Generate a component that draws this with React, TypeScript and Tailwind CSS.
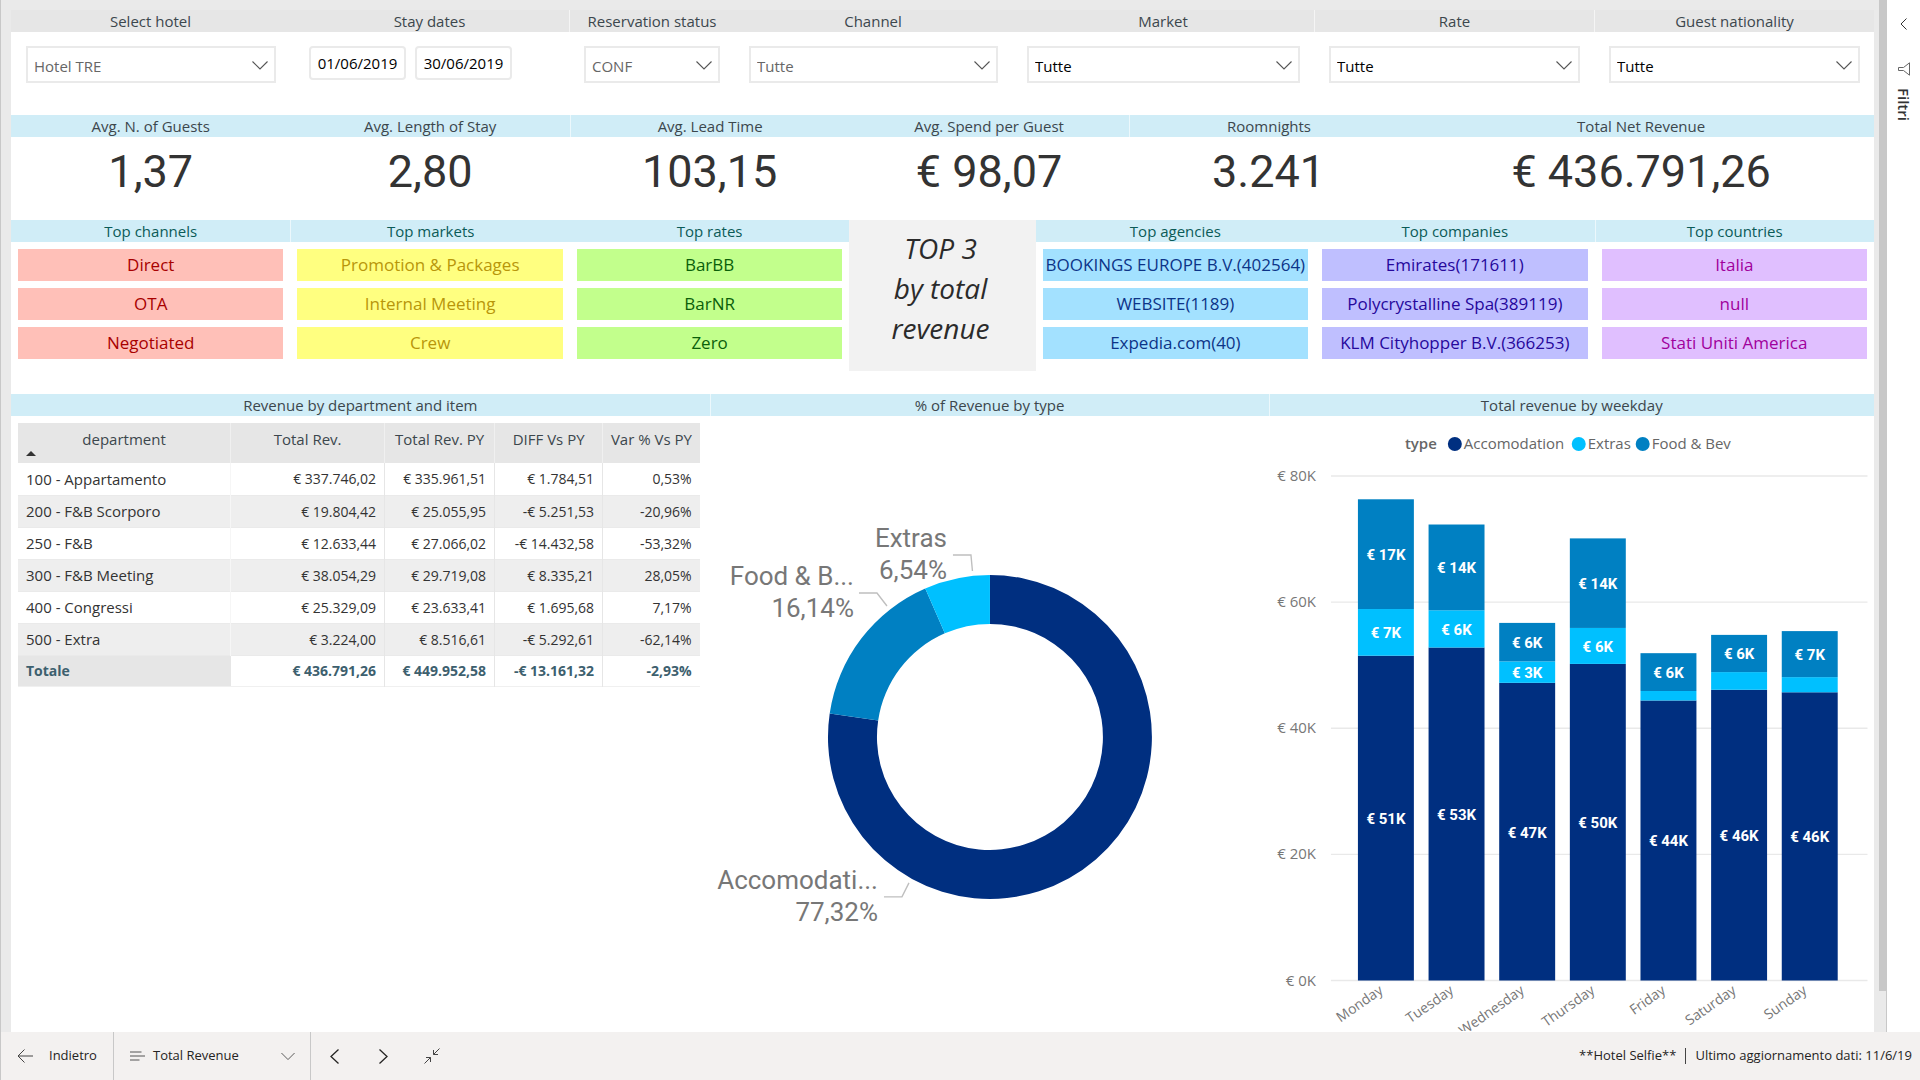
import { useState } from "react";
import { clsx } from "clsx";

const NAVY = "#002f80";
const CYAN = "#00c0ff";
const BLUE = "#0080c2";

const filters = [
    { id: "hotel", label: "Select hotel", value: "Hotel TRE", muted: true },
    { id: "dates", label: "Stay dates" },
    { id: "status", label: "Reservation status", value: "CONF", muted: true, divider: true },
    { id: "channel", label: "Channel", value: "Tutte", muted: true },
    { id: "market", label: "Market", value: "Tutte" },
    { id: "rate", label: "Rate", value: "Tutte", divider: true },
    { id: "nationality", label: "Guest nationality", value: "Tutte", divider: true }
];

const kpis = [
    { label: "Avg. N. of Guests", value: "1,37" },
    { label: "Avg. Length of Stay", value: "2,80" },
    { label: "Avg. Lead Time", value: "103,15", divider: true },
    { label: "Avg. Spend per Guest", value: "€ 98,07" },
    { label: "Roomnights", value: "3.241", divider: true },
    { label: "Total Net Revenue", value: "€ 436.791,26" }
];

const topLeft = [
    { title: "Top channels", color: "bg-[#ffc0b8] text-[#a80000]", items: ["Direct", "OTA", "Negotiated"] },
    { title: "Top markets", color: "bg-[#ffff80] text-[#b8960a]", items: ["Promotion & Packages", "Internal Meeting", "Crew"], divider: true },
    { title: "Top rates", color: "bg-[#c2ff8c] text-[#0a600a]", items: ["BarBB", "BarNR", "Zero"] }
];

const topRight = [
    { title: "Top agencies", color: "bg-[#a3e1ff] text-[#0c3488]", items: ["BOOKINGS EUROPE B.V.(402564)", "WEBSITE(1189)", "Expedia.com(40)"] },
    { title: "Top companies", color: "bg-[#bfbfff] text-[#26089c]", items: ["Emirates(171611)", "Polycrystalline Spa(389119)", "KLM Cityhopper B.V.(366253)"] },
    { title: "Top countries", color: "bg-[#e0bfff] text-[#a0009c]", items: ["Italia", "null", "Stati Uniti America"], divider: true }
];

const rows = [
    ["100 - Appartamento", "€ 337.746,02", "€ 335.961,51", "€ 1.784,51", "0,53%"],
    ["200 - F&B Scorporo", "€ 19.804,42", "€ 25.055,95", "-€ 5.251,53", "-20,96%"],
    ["250 - F&B", "€ 12.633,44", "€ 27.066,02", "-€ 14.432,58", "-53,32%"],
    ["300 - F&B Meeting", "€ 38.054,29", "€ 29.719,08", "€ 8.335,21", "28,05%"],
    ["400 - Congressi", "€ 25.329,09", "€ 23.633,41", "€ 1.695,68", "7,17%"],
    ["500 - Extra", "€ 3.224,00", "€ 8.516,61", "-€ 5.292,61", "-62,14%"]
];
const totals = ["Totale", "€ 436.791,26", "€ 449.952,58", "-€ 13.161,32", "-2,93%"];

// values in thousands: accomodation, extras, food & bev
const weekdays = [
    { day: "Monday", values: [51.5, 7.4, 17.4], labels: ["€ 51K", "€ 7K", "€ 17K"] },
    { day: "Tuesday", values: [52.8, 5.9, 13.6], labels: ["€ 53K", "€ 6K", "€ 14K"] },
    { day: "Wednesday", values: [47.2, 3.4, 6.1], labels: ["€ 47K", "€ 3K", "€ 6K"] },
    { day: "Thursday", values: [50.2, 5.7, 14.2], labels: ["€ 50K", "€ 6K", "€ 14K"] },
    { day: "Friday", values: [44.4, 1.5, 6], labels: ["€ 44K", "", "€ 6K"] },
    { day: "Saturday", values: [46.1, 2.8, 5.9], labels: ["€ 46K", "", "€ 6K"] },
    { day: "Sunday", values: [45.7, 2.4, 7.3], labels: ["€ 46K", "", "€ 7K"] }
];

function Chevron({ className }: { className?: string }) {
    return (
        <svg viewBox="0 0 16 9" className={clsx("w-4 h-[9px]", className)} fill="none" stroke="currentColor" strokeWidth="1.1">
            <path d="M0.5 0.5 8 8 15.5 0.5" />
        </svg>
    );
}

function Heading({ children, className, divider }: any) {
    return (
        <h2 className={clsx("h-[22px] text-[15px] leading-[22px] text-center whitespace-nowrap", divider && "border-l border-white/60", className)}>
            {children}
        </h2>
    );
}

function FilterSelect({ id, label, value, muted }: any) {
    return (
        <div className={clsx("relative ml-[15px] mr-[14px] mt-[14px]", muted ? "text-[#666]" : "text-black")}>
            <select id={id} aria-label={label} className="appearance-none w-full h-[37px] pl-[6px] pr-8 pt-1 bg-white border-2 border-[#eaeaea] text-[15px] outline-none">
                <option>{value}</option>
            </select>
            <Chevron className="absolute right-2 top-[15px] pointer-events-none text-[#555]" />
        </div>
    );
}

function DateRange() {
    const [range, setRange] = useState({ from: "01/06/2019", to: "30/06/2019" });

    const handleChange = (e: any) => {
        setRange({ ...range, [e.target.name]: e.target.value });
    };

    const box = "w-[97px] h-[34px] border-2 border-[#eaeaea] rounded-sm text-[15px] text-black text-center outline-none";
    return (
        <div className="flex gap-[9px] ml-[19px] mt-[14px]">
            <input name="from" aria-label="From" value={range.from} onChange={handleChange} className={box} />
            <input name="to" aria-label="To" value={range.to} onChange={handleChange} className={box} />
        </div>
    );
}

function TopList({ title, color, items, divider }: any) {
    return (
        <div>
            <Heading divider={divider} className="bg-[#d0edf7] text-[#0b5b57]">{title}</Heading>
            <ul className="px-[7px] pt-[7px] space-y-[7px]">
                {items.map((item: string) => (
                    <li key={item} className={clsx("h-8 leading-8 text-[17px] text-center whitespace-nowrap", color)}>{item}</li>
                ))}
            </ul>
        </div>
    );
}

function RevenueTable() {
    return (
        <div className="pl-[7px] pr-[10px] pt-[7px]">
            <table className="w-full table-fixed border-collapse text-[14px] text-[#333]">
                <colgroup>
                    <col />
                    <col className="w-[154px]" />
                    <col className="w-[110px]" />
                    <col className="w-[108px]" />
                    <col className="w-[97px]" />
                </colgroup>
                <thead>
                    <tr className="h-10 bg-[#e6e6e6] text-[15px] text-[#3c474d]">
                        <th className="relative font-normal align-top pt-[5px]">
                            department
                            <svg viewBox="0 0 10 5" className="absolute left-2 bottom-[7px] w-[10px] h-[5px]"><path d="M0 5 5 0l5 5z" fill="#333" /></svg>
                        </th>
                        {["Total Rev.", "Total Rev. PY", "DIFF Vs PY", "Var % Vs PY"].map((h) => (
                            <th key={h} className="font-normal align-top pt-[5px] border-l border-[#f0f0f0] whitespace-nowrap">{h}</th>
                        ))}
                    </tr>
                </thead>
                <tbody>
                    {rows.map((row) => (
                        <tr key={row[0]} className="h-8 even:bg-[#eeeeee] border-b border-[#eaeaea]">
                            {row.map((cell, i) => (
                                <td key={i} className={clsx("px-2 py-0 whitespace-nowrap", i === 0 ? "text-[15px]" : "text-right", i === 1 && "border-l border-[#f6f6f6]", i > 1 && "border-l border-[#e6e6e6]")}>{cell}</td>
                            ))}
                        </tr>
                    ))}
                </tbody>
                <tfoot>
                    <tr className="h-[31px] text-[#3d606e] font-bold border-b border-[#f0f0f0]">
                        {totals.map((cell, i) => (
                            <td key={i} className={clsx("py-0 whitespace-nowrap", i === 0 ? "px-2 bg-[#e6e6e6]" : "pr-2 text-right", i > 1 && "border-l border-[#e6e6e6]")}>{cell}</td>
                        ))}
                    </tr>
                </tfoot>
            </table>
        </div>
    );
}

const CX = 280;
const CY = 321;

function arc(from: number, to: number) {
    const point = (pct: number, r: number) => {
        const a = (pct / 100) * 2 * Math.PI;
        return `${CX + r * Math.sin(a)} ${CY - r * Math.cos(a)}`;
    };
    const large = to - from > 50 ? 1 : 0;
    return `M${point(from, 162)}A162 162 0 ${large} 1 ${point(to, 162)}L${point(to, 113)}A113 113 0 ${large} 0 ${point(from, 113)}Z`;
}

function DonutChart() {
    return (
        <svg viewBox="0 0 559 616" className="block w-full" role="img" aria-label="% of Revenue by type">
            <path d={arc(0, 77.32)} fill={NAVY} />
            <path d={arc(77.32, 93.46)} fill={BLUE} />
            <path d={arc(93.46, 100)} fill={CYAN} />
            <g fill="none" stroke="#bfbfbf" strokeWidth="1.4">
                <path d="M243 139h18l1.500 16" />
                <path d="M149 177h18l10 13" />
                <path d="M174 481h18l7-14" />
            </g>
            <g className="font-[Roboto]" fontSize="26" fill="#777" textAnchor="end">
                <text x="237" y="131">Extras</text>
                <text x="237" y="163">6,54%</text>
                <text x="144" y="169">Food &amp; B...</text>
                <text x="144" y="201">16,14%</text>
                <text x="168" y="473">Accomodati...</text>
                <text x="168" y="505">77,32%</text>
            </g>
        </svg>
    );
}

function WeekdayChart() {
    const base = 565;
    const scale = 505 / 80;
    const colors = [NAVY, CYAN, BLUE];
    return (
        <svg viewBox="0 0 606 616" className="block w-full" fontSize="15" role="img" aria-label="Total revenue by weekday">
            <g fill="#666">
                <text x="136" y="33" fontWeight="600">type</text>
                <circle cx="186" cy="28" r="7" fill={NAVY} />
                <text x="195" y="33">Accomodation</text>
                <circle cx="310" cy="28" r="7" fill={CYAN} />
                <text x="319" y="33">Extras</text>
                <circle cx="374" cy="28" r="7" fill={BLUE} />
                <text x="383" y="33">Food &amp; Bev</text>
            </g>
            {[0, 20, 40, 60, 80].map((v) => (
                <g key={v}>
                    <line x1="62" x2="599" y1={base - v * scale} y2={base - v * scale} stroke="#e9e9e9" strokeWidth="1.4" />
                    <text x="47" y={base - v * scale + 5} fill="#777" textAnchor="end">€ {v}K</text>
                </g>
            ))}
            {weekdays.map((d, i) => {
                const x = 89 + i * 70.7;
                let top = base;
                return (
                    <g key={d.day}>
                        {d.values.map((v, j) => {
                            const h = v * scale;
                            top -= h;
                            return (
                                <g key={j}>
                                    <rect x={x} y={top} width="56" height={h} fill={colors[j]} />
                                    <text x={x + 28} y={top + h / 2 + 6} className="font-[Roboto]" fontWeight="700" fill="#fff" textAnchor="middle">{d.labels[j]}</text>
                                </g>
                            );
                        })}
                        <text transform={`translate(${x + 26} 577) rotate(-35)`} fontSize="14" fill="#777" textAnchor="end">{d.day}</text>
                    </g>
                );
            })}
        </svg>
    );
}

export default function App() {
    return (
        <div className="flex flex-col h-screen bg-white border-l border-[#c8c8c8] font-['Open_Sans','Noto_Sans',sans-serif] overflow-hidden">
            <div className="flex flex-1 min-h-0">
                <main className="flex-1 min-w-0 overflow-hidden bg-[#eaeaea] pl-[10px] pr-[5px] pt-[10px]">
                    <div className="bg-white min-h-full text-[#3c474d]">
                        <section className="grid grid-cols-[279fr_279fr_165fr_278fr_302fr_280fr_280fr] h-[105px]">
                            {filters.map((f) => (
                                <div key={f.id}>
                                    <Heading divider={f.divider} className="bg-[#e6e6e6]">{f.label}</Heading>
                                    {f.id === "dates" ? <DateRange /> : <FilterSelect {...f} />}
                                </div>
                            ))}
                        </section>

                        <section className="grid grid-cols-[3fr_3fr_3fr_3fr_3fr_5fr] h-[105px]">
                            {kpis.map((k) => (
                                <div key={k.label}>
                                    <Heading divider={k.divider} className="bg-[#d0edf7]">{k.label}</Heading>
                                    <p className="pt-1 font-[Roboto] text-[45px] leading-[62px] text-center text-[#333]">{k.value}</p>
                                </div>
                            ))}
                        </section>

                        <section className="grid grid-cols-[3fr_3fr_3fr_2fr_3fr_3fr_3fr] h-[174px]">
                            {topLeft.map((t) => <TopList key={t.title} {...t} />)}
                            <p className="h-[151px] pt-2 pr-1 bg-[#f2f2f2] text-[28px] leading-10 italic text-center text-[#2b2b2b]">
                                TOP 3<br />by total<br />revenue
                            </p>
                            {topRight.map((t) => <TopList key={t.title} {...t} />)}
                        </section>

                        <section className="grid grid-cols-[15fr_12fr_13fr]">
                            <div>
                                <Heading className="bg-[#d0edf7]">Revenue by department and item</Heading>
                                <RevenueTable />
                            </div>
                            <div>
                                <Heading divider className="bg-[#d0edf7]">% of Revenue by type</Heading>
                                <DonutChart />
                            </div>
                            <div>
                                <Heading divider className="bg-[#d0edf7]">Total revenue by weekday</Heading>
                                <WeekdayChart />
                            </div>
                        </section>
                    </div>
                </main>

                <div className="w-2 bg-[#eaeaea] border-r border-[#c8c8c8]">
                    <div className="w-2 h-[96%] bg-[#c8c8c8]" />
                </div>

                <aside className="w-[33px] flex flex-col items-center pt-[18px] text-[#333]">
                    <button aria-label="Espandi filtri">
                        <svg viewBox="0 0 7 12" className="w-[7px] h-3" fill="none" stroke="currentColor"><path d="M6.500 0.500 1 6l5.500 5.500" /></svg>
                    </button>
                    <svg viewBox="0 0 12 14" className="w-3 h-[14px] mt-8 mb-3" fill="none" stroke="#666"><path d="M11.500 0.800v12.400L5.500 8.500H0.500v-3h5z" /></svg>
                    <span className="[writing-mode:vertical-rl] text-[15px] leading-5 font-semibold">Filtri</span>
                </aside>
            </div>

            <footer className="flex items-center h-12 bg-[#f3f1f0] text-[13px] text-[#252423]">
                <button className="flex items-center gap-4 h-full w-[113px] pl-4 border-r border-[#c8c8c8]">
                    <svg viewBox="0 0 16 14" className="w-4 h-[14px]" fill="none" stroke="#444"><path d="M16 7H1M7.500 0.500 1 7l6.500 6.500" /></svg>
                    Indietro
                </button>
                <button className="flex items-center h-full w-[197px] pl-4 pr-[15px] border-r border-[#c8c8c8]">
                    <svg viewBox="0 0 15 10" className="w-[15px] h-[10px] mr-2" fill="none" stroke="#555"><path d="M0 1h11.500M0 5h15M0 9h9.500" /></svg>
                    Total Revenue
                    <Chevron className="ml-auto w-[14px] h-2 text-[#555]" />
                </button>
                <button aria-label="Pagina precedente" className="ml-[19px]">
                    <svg viewBox="0 0 9 15" className="w-[9px] h-[15px]" fill="none" stroke="#252423" strokeWidth="1.3"><path d="M8.500 0.500 1 7.500l7.500 7" /></svg>
                </button>
                <button aria-label="Pagina successiva" className="ml-10">
                    <svg viewBox="0 0 9 15" className="w-[9px] h-[15px]" fill="none" stroke="#252423" strokeWidth="1.3"><path d="M0.500 0.500 8 7.500l-7.500 7" /></svg>
                </button>
                <button aria-label="Riduci" className="ml-9">
                    <svg viewBox="0 0 16 16" className="w-4 h-4" fill="none" stroke="#444"><path d="M15.500 0.500 9.500 6.500M9.500 2v4.500H14M0.500 15.500l6-6M2 9.500h4.500V14" /></svg>
                </button>
                <p className="ml-auto pr-2 flex items-center">
                    **Hotel Selfie**
                    <span className="mx-[9px] h-4 w-px bg-[#444]" />
                    Ultimo aggiornamento dati: 11/6/19
                </p>
            </footer>
        </div>
    );
}
